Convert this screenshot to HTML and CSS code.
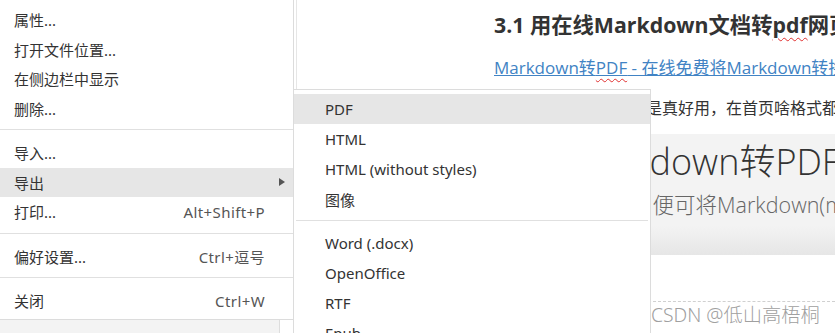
FILE: index.html
```html
<!DOCTYPE html>
<html lang="zh-CN">
<head>
<meta charset="utf-8">
<title>Export menu</title>
<link rel="stylesheet" href="styles.css">
</head>
<body>
<div class="app">
  <aside class="sidebar">
    <div class="sidebar-body"></div>
    <div class="sidebar-footer">
      <div class="footer-main"></div>
      <div class="footer-side"></div>
    </div>
  </aside>
  <main class="doc">
    <h3 class="doc-title">3.1 用在线Markdown文档转<span class="spell">pdf</span>网页</h3>
    <p class="doc-link"><a href="#">Markdown转<span class="spell">PDF</span> - 在线免费将Markdown转换为PDF</a></p>
    <p class="doc-text">这个在线转换的网站是真好用，在首页啥格式都能转</p>
    <div class="shot">
      <div class="shot-title">Markdown转PDF</div>
      <div class="shot-sub">只需一步，便可将Markdown(md)文件转换为PDF</div>
    </div>
    <div class="watermark">CSDN @低山高梧桐</div>
  </main>
</div>

<div class="menu file-menu">
  <div class="item">属性...</div>
  <div class="item">打开文件位置...</div>
  <div class="item">在侧边栏中显示</div>
  <div class="item">删除...</div>
  <div class="sep"></div>
  <div class="item">导入...</div>
  <div class="item active">导出<span class="arrow"></span></div>
  <div class="item">打印...<span class="key">Alt+Shift+P</span></div>
  <div class="sep"></div>
  <div class="item">偏好设置...<span class="key">Ctrl+逗号</span></div>
  <div class="sep"></div>
  <div class="item">关闭<span class="key">Ctrl+W</span></div>
</div>

<div class="menu sub-menu">
  <div class="item active">PDF</div>
  <div class="item">HTML</div>
  <div class="item">HTML (without styles)</div>
  <div class="item">图像</div>
  <div class="sep"></div>
  <div class="item">Word (.docx)</div>
  <div class="item">OpenOffice</div>
  <div class="item">RTF</div>
  <div class="item">Epub</div>
</div>
</body>
</html>
```
FILE: styles.css
```css
html, body {
  margin: 0;
  padding: 0;
}
body {
  width: 835px;
  height: 333px;
  overflow: hidden;
  position: relative;
  background: #fff;
  font-family: "Noto Sans", "Noto Sans CJK SC", sans-serif;
  color: #333;
}
.app {
  display: flex;
  height: 333px;
}
.sidebar {
  width: 296px;
  border-right: 1px solid #e6e6e6;
  display: flex;
  flex-direction: column;
  flex-shrink: 0;
}
.sidebar-body {
  flex: 1;
}
.sidebar-footer {
  height: 14px;
  display: flex;
}
.footer-main {
  width: 279px;
  background: #f3f3f3;
  border-right: 1px solid #ddd;
}
.footer-side {
  flex: 1;
}
.doc {
  flex: 1;
  padding-left: 197px;
  min-width: 0;
  white-space: nowrap;
  overflow: hidden;
  font-family: "Open Sans", "Noto Sans CJK SC", sans-serif;
}
.doc-title {
  margin: 0;
  padding-top: 12px;
  line-height: 26px;
  font-size: 21.3px;
  font-weight: 700;
  color: #333;
}
.spell {
  text-decoration: underline wavy #e03030;
  text-decoration-thickness: 1px;
  text-underline-offset: 4px;
}
.doc-link {
  margin: 17px 0 0;
  line-height: 26px;
  font-size: 17px;
}
.doc-link a {
  color: #4183c4;
  text-decoration: underline;
}
.doc-text {
  margin: 14px 0 0;
  line-height: 26px;
  font-size: 16px;
  text-indent: 8px;
  color: #333;
}
.shot {
  margin-top: 13px;
  height: 121px;
  background: linear-gradient(to bottom, #f3f3f3 0, #f3f3f3 92px, #e6e6e6 121px);
  box-sizing: border-box;
  overflow: hidden;
}
.shot-title {
  margin-top: 6px;
  padding-left: 74px;
  line-height: 44px;
  font-size: 36px;
  font-weight: 300;
  color: #333;
}
.shot-sub {
  margin-top: 7px;
  padding-left: 51px;
  line-height: 28px;
  font-size: 21.5px;
  font-weight: 300;
  color: #666;
}
.watermark {
  margin-top: 46px;
  border-top: 1px dashed #d0d0d0;
  line-height: 26px;
  font-size: 19.3px;
  color: #a0a0a0;
  padding-left: 157px;
  font-family: "Noto Sans", "Noto Sans CJK SC", sans-serif;
  font-weight: 300;
}

.menu {
  position: absolute;
  background: #fff;
  font-size: 15px;
  color: #333;
  box-sizing: border-box;
}
.item {
  display: flex;
  align-items: center;
  justify-content: space-between;
  position: relative;
  white-space: nowrap;
}
.item.active {
  background: #e6e6e6;
}
.sep {
  height: 1px;
  background: #e0e0e0;
}
.file-menu {
  left: 0;
  top: 0;
  width: 294px;
  height: 320px;
  padding-top: 5px;
  border-right: 1px solid #dcdcdc;
  border-bottom: 1px solid #dcdcdc;
}
.file-menu .item {
  height: 29.5px;
  padding: 0 28px 0 14px;
}
.file-menu .sep {
  margin: 6px 0 8px;
}
.key {
  color: #555;
  letter-spacing: 0.4px;
}
.arrow {
  position: absolute;
  right: 8px;
  top: 50%;
  margin-top: -4px;
  width: 0;
  height: 0;
  border-top: 4.5px solid transparent;
  border-bottom: 4.5px solid transparent;
  border-left: 6px solid #555;
}
.sub-menu {
  left: 293px;
  top: 89px;
  width: 358px;
  height: 260px;
  padding-top: 4px;
  border: 1px solid #dcdcdc;
}
.sub-menu .item {
  height: 30px;
  padding-left: 31px;
}
.sub-menu .sep {
  margin: 6px 2px 7px;
}
```
